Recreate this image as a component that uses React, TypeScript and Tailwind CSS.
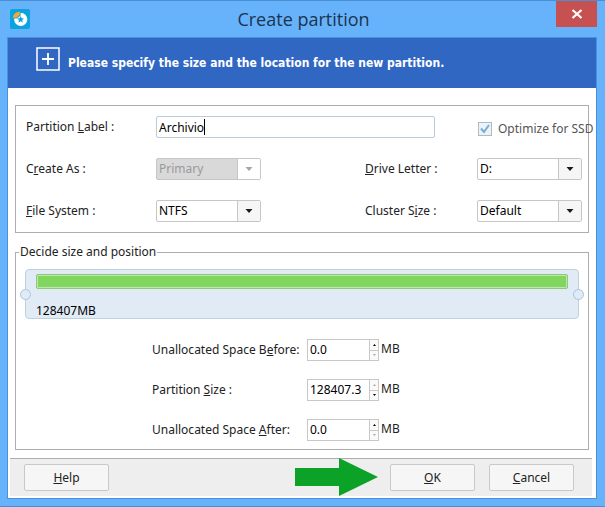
import { useState } from 'react'
import type { ReactNode } from 'react'

const SIZES = [
  { id: 'before', label: <>Unallocated Space B<u>e</u>fore:</>, value: '0.0', canUp: true, canDown: false },
  { id: 'size', label: <>Partition <u>S</u>ize :</>, value: '128407.3', canUp: false, canDown: true },
  { id: 'after', label: <>Unallocated Space <u>A</u>fter:</>, value: '0.0', canUp: true, canDown: false },
]

export default function App() {
  return (
    <div className="flex min-h-screen flex-col border-y border-[#4a8fd3] bg-[#66b3fb] font-['Noto_Sans',sans-serif] text-xs text-[#222]">
      <TitleBar />
      <main className="mr-2 mb-[7px] ml-[7px] flex flex-1 flex-col overflow-hidden border border-[#4b90dc] bg-white pb-0.5">
        <header className="flex h-[50px] shrink-0 items-center gap-2 bg-[#3067c3] pl-7 text-white">
          <svg viewBox="0 0 24 24" className="-mt-2 h-6 w-6" fill="none" stroke="currentColor" aria-hidden="true">
            <path d="M1 1H23V23H1Z" strokeWidth="1.5" />
            <path d="M12 6V18M6 12H18" strokeWidth="1.8" />
          </svg>
          <h2 className="font-['DejaVu_Sans_Condensed','DejaVu_Sans',sans-serif] font-bold">
            Please specify the size and the location for the new partition.
          </h2>
        </header>
        <form className="flex flex-1 flex-col" onSubmit={(e) => e.preventDefault()}>
          <General />
          <SizeAndPosition />
          <Footer />
        </form>
      </main>
    </div>
  )
}

function TitleBar() {
  return (
    <div className="grid h-9 shrink-0 grid-cols-[1fr_auto_1fr] items-start pr-2 pl-2.5">
      <Logo />
      <h1 className="pt-1.5 font-['Open_Sans',sans-serif] text-lg leading-6 text-[#1c3450]">Create partition</h1>
      <button
        type="button"
        aria-label="Close"
        className="flex h-[26px] w-[41px] items-center justify-center justify-self-end bg-[#c75050] text-white"
      >
        <svg viewBox="0 0 12 10" className="h-2.5 w-3" stroke="currentColor" strokeWidth="2.2" aria-hidden="true">
          <path d="M1.5 1L10.5 9M10.5 1L1.5 9" />
        </svg>
      </button>
    </div>
  )
}

function Logo() {
  return (
    <svg viewBox="0 0 20 20" className="mt-2 h-5 w-5" aria-hidden="true">
      <rect width="20" height="20" rx="2" fill="#0ba3e0" />
      <circle cx="10.7" cy="10.3" r="6.6" fill="#fff" />
      <path d="M10.6 7L11.6 9.2L14 9.4L12.2 11L12.8 13.4L10.6 12.2L8.4 13.4L9 11L7.2 9.4L9.6 9.2Z" fill="#0ba3e0" />
      <path d="M2.4 9.6C2.4 5.2 5.4 2.6 10.6 2.6V6.4L7 9.6Z" fill="#0ba3e0" />
      <path d="M2.8 8.8C3.2 5.4 5.6 3 9.8 2.8V5.8L6.6 8.8Z" fill="#f3aa2c" />
    </svg>
  )
}

function General() {
  const [name, setName] = useState('Archivio')

  return (
    <section className="mx-[7px] mt-[17px] grid grid-cols-[130px_105px_1fr_112px_105px] items-center gap-y-5 border border-[#adadad] pt-2.5 pr-1.5 pb-2.5 pl-2.5">
      <label htmlFor="label">Partition <u>L</u>abel :</label>
      <div className="relative col-span-3 mr-[42px]">
        <input
          id="label"
          value={name}
          onChange={(e) => setName(e.target.value)}
          className="block h-[22px] w-full rounded-xs border border-[#bccbd9] px-0.5 text-black outline-none"
        />
        <span
          aria-hidden="true"
          className="pointer-events-none absolute top-[3px] left-[3px] h-4 border-r border-black text-transparent"
        >
          {name}
        </span>
      </div>
      <label className="mt-1 flex items-center gap-1.5 whitespace-nowrap text-[#555]">
        <span className="relative ml-px block h-3.5 w-3.5 shrink-0">
          <input
            type="checkbox"
            defaultChecked
            className="block h-3.5 w-3.5 appearance-none border border-[#b4b9bd] bg-[#eaf3fa]"
          />
          <svg
            viewBox="0 0 14 14"
            className="pointer-events-none absolute inset-0"
            fill="none"
            stroke="#78acd0"
            strokeWidth="2"
            aria-hidden="true"
          >
            <path d="M3 6.5L6 10L11 3" />
          </svg>
        </span>
        Optimize for SSD
      </label>

      <label htmlFor="create-as">C<u>r</u>eate As :</label>
      <Dropdown id="create-as" options={['Primary', 'Logical']} disabled />
      <label htmlFor="letter" className="col-start-4"><u>D</u>rive Letter :</label>
      <Dropdown id="letter" options={['D:', 'E:', 'F:']} />

      <label htmlFor="fs"><u>F</u>ile System :</label>
      <Dropdown id="fs" options={['NTFS', 'FAT32']} />
      <label htmlFor="cluster" className="col-start-4">Cluster S<u>i</u>ze :</label>
      <Dropdown id="cluster" options={['Default', '4 KB', '8 KB']} />
    </section>
  )
}

function Dropdown({ id, options, disabled = false }: { id: string; options: string[]; disabled?: boolean }) {
  return (
    <div className="relative">
      <select
        id={id}
        disabled={disabled}
        className="block h-[22px] w-full appearance-none rounded-xs border border-[#c6c6c6] bg-white pr-6 pl-0.5 text-black disabled:bg-[#d9d9d9] disabled:text-[#9a9a9a] disabled:opacity-100"
      >
        {options.map((o) => (
          <option key={o}>{o}</option>
        ))}
      </select>
      <span
        className={`pointer-events-none absolute inset-y-px right-px flex w-[23px] items-center justify-center border-l border-[#c6c6c6] ${
          disabled ? 'bg-white text-[#a5a5a5]' : 'bg-[#f6f6f6] text-[#1a1a1a]'
        }`}
      >
        <svg viewBox="0 0 8 4" className="h-1 w-2" fill="currentColor" aria-hidden="true">
          <path d="M0.5 0H7.5L4 4Z" />
        </svg>
      </span>
    </div>
  )
}

function SizeAndPosition() {
  return (
    <fieldset className="mx-[7px] mt-[11px] border border-[#adadad] px-[9px] pb-2">
      <legend className="-ml-1.5 px-px leading-4">Decide size and position</legend>
      <div className="relative mt-[9px] flex h-[50px] flex-col justify-between rounded border border-[#bdd1df] bg-[#e0ebf6] px-2.5 pt-1">
        <div className="h-[15px] rounded-xs border border-[#8ec878] bg-[#80d65f] ring-1 ring-[#c0e6b4] ring-inset" />
        <div className="leading-[14px] text-black">128407MB</div>
        <Handle className="-left-1.5" label="Partition start" />
        <Handle className="-right-1.5" label="Partition end" />
      </div>
      <div className="mt-5 ml-[127px] flex flex-col gap-[18px]">
        {SIZES.map((s) => (
          <SpinRow key={s.id} {...s} />
        ))}
      </div>
    </fieldset>
  )
}

function Handle({ className, label }: { className: string; label: string }) {
  return (
    <button
      type="button"
      aria-label={label}
      className={`absolute top-[19px] h-[11px] w-[11px] rounded-full border border-[#a9c5de] bg-[#e0ebf6] ${className}`}
    />
  )
}

interface SpinRowProps {
  id: string
  label: ReactNode
  value: string
  canUp: boolean
  canDown: boolean
}

function SpinRow({ id, label, value, canUp, canDown }: SpinRowProps) {
  return (
    <div className="flex h-[22px] items-center">
      <label htmlFor={id} className="w-[155px]">{label}</label>
      <div className="flex h-full w-[72px] border border-[#c8c8c8]">
        <input id={id} defaultValue={value} className="w-0 flex-1 pl-0.5 text-black outline-none" />
        <div className="flex w-[9px] flex-col border-l border-[#c8c8c8]">
          <Step label="Increase" path="M0 2H3L1.5 0Z" enabled={canUp} />
          <Step label="Decrease" path="M0 0H3L1.5 2Z" enabled={canDown} />
        </div>
      </div>
      <span className="mb-0.5 ml-0.5">MB</span>
    </div>
  )
}

function Step({ label, path, enabled }: { label: string; path: string; enabled: boolean }) {
  return (
    <button
      type="button"
      aria-label={label}
      disabled={!enabled}
      className="flex flex-1 items-center justify-center bg-[#fafafa] text-black last:border-t last:border-[#c8c8c8] disabled:text-[#aaa]"
    >
      <svg viewBox="0 0 3 2" className="h-0.5 w-[3px]" fill="currentColor" aria-hidden="true">
        <path d={path} />
      </svg>
    </button>
  )
}

function Footer() {
  return (
    <footer className="mt-auto mr-1 ml-0.5 flex items-center border-t border-[#adadad] bg-[#eee] pr-[18px] pl-3.5">
      <PushButton><u>H</u>elp</PushButton>
      <svg viewBox="0 0 83 38" className="mr-3 -mt-px ml-auto h-[38px] w-[83px]" fill="#0ca228" aria-hidden="true">
        <path d="M0 10H44V0L83 19L44 38V28H0Z" />
      </svg>
      <PushButton><u>O</u>K</PushButton>
      <span className="w-3.5" />
      <PushButton><u>C</u>ancel</PushButton>
    </footer>
  )
}

function PushButton({ children }: { children: ReactNode }) {
  return (
    <button type="button" className="h-[27px] w-[85px] rounded-xs border border-[#c9c9c9] bg-[#f6f6f6]">
      {children}
    </button>
  )
}
